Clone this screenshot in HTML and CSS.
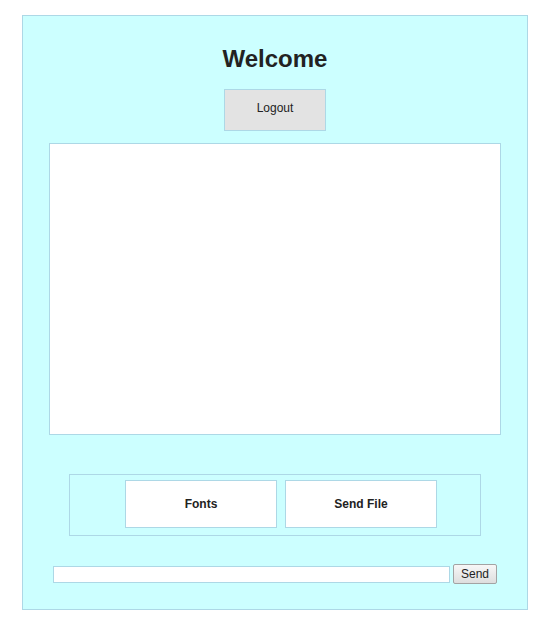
FILE: index.html
```html
<!DOCTYPE html>
<html>
<head>
<meta charset="utf-8">
<title>Chat</title>
<link rel="stylesheet" href="styles.css">
</head>
<body>
<div class="panel">
  <h1 class="title">Welcome</h1>
  <div class="logout-row"><button class="logout">Logout</button></div>
  <div class="chat"></div>
  <div class="tools">
    <button class="tool">Fonts</button>
    <button class="tool">Send File</button>
  </div>
  <div class="send-row">
    <input class="msg" type="text">
    <button class="send">Send</button>
  </div>
</div>
</body>
</html>
```
FILE: styles.css
```css
html, body {
  margin: 0;
  padding: 0;
  background: #ffffff;
}
body {
  font-family: "Liberation Sans", Arial, sans-serif;
  color: #222;
}
.panel {
  margin: 15px 22px 0;
  border: 1px solid #add8e6;
  background: #ccffff;
  padding: 29px 0 25px;
  display: flex;
  flex-direction: column;
}
.title {
  margin: 0;
  font-size: 24px;
  line-height: 28px;
  font-weight: bold;
  text-align: center;
  color: #222;
}
.logout-row {
  display: flex;
  justify-content: center;
  margin-top: 16px;
}
.logout {
  box-sizing: border-box;
  width: 102px;
  height: 42px;
  margin: 0;
  padding: 0 0 5px;
  background: #e3e3e3;
  border: 1px solid #add8e6;
  font-family: "Liberation Sans", Arial, sans-serif;
  font-size: 12px;
  line-height: 14px;
  color: #222;
}
.chat {
  box-sizing: border-box;
  height: 292px;
  margin: 12px 26px 0;
  background: #ffffff;
  border: 1px solid #add8e6;
}
.tools {
  box-sizing: border-box;
  height: 62px;
  margin: 39px 46px 0;
  border: 1px solid #add8e6;
  padding: 5px 0 0 55px;
  display: flex;
  gap: 8px;
  align-items: flex-start;
}
.tool {
  box-sizing: border-box;
  width: 152px;
  height: 48px;
  margin: 0;
  padding: 0;
  background: #ffffff;
  border: 1px solid #add8e6;
  font-family: "Liberation Sans", Arial, sans-serif;
  font-size: 12px;
  font-weight: bold;
  color: #222;
}
.send-row {
  margin: 28px 30px 0;
  display: flex;
  align-items: center;
  gap: 3px;
}
.msg {
  box-sizing: border-box;
  width: 397px;
  height: 17px;
  margin: 0;
  padding: 0 2px;
  border: 1px solid #add8e6;
  background: #ffffff;
  outline: none;
}
.send {
  box-sizing: border-box;
  width: 44px;
  height: 20px;
  margin: 0;
  padding: 0;
  border: 1px solid #a3a3a3;
  border-radius: 2px;
  background: linear-gradient(#f7f7f7, #dedede);
  font-family: "Liberation Sans", Arial, sans-serif;
  font-size: 12px;
  color: #222;
}
```
